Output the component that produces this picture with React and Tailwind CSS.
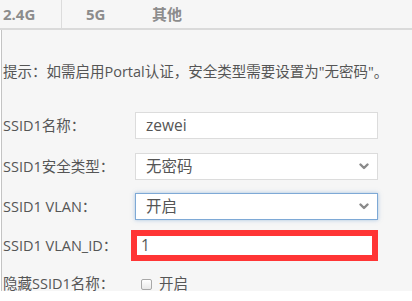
import React from 'react'

const FONT = "font-['Open_Sans','Noto_Sans_CJK_SC',sans-serif]"

function Chevron() {
  return (
    <svg width="10" height="7" viewBox="0 0 10 7" className="shrink-0">
      <polyline points="1.5,1.5 5,5 8.5,1.5" fill="none" stroke="#8a8a8a" strokeWidth="2.4" strokeLinecap="round" strokeLinejoin="round" />
    </svg>
  )
}

function Label({ children }) {
  return <div className="w-[133px] shrink-0 pl-px text-[14.5px] text-[#555] whitespace-nowrap">{children}</div>
}

export default function App() {
  return (
    <div className={`${FONT} w-[412px] h-[301px] overflow-hidden bg-white flex flex-col`}>
      {/* Tabs */}
      <div className="h-[30px] shrink-0 flex bg-[#f6f6f6] border-b-2 border-[#dadada]">
        <div className="w-[62px] h-[28px] flex items-center pl-[3px] border-r border-[#dcdcdc] text-[15px] font-bold text-[#8c8c8c]">2.4G</div>
        <div className="w-[64px] h-[28px] flex items-center pl-[24px] text-[15px] font-bold text-[#8c8c8c]">5G</div>
        <div className="w-[62px] h-[28px] flex items-center pl-[26px] text-[15px] font-bold text-[#8c8c8c]">其他</div>
      </div>

      {/* Body */}
      <div className="h-[261px] shrink-0 ml-px border-l border-[#c4c4c4] bg-[#f6f6f6] flex flex-col">
        <div className="mt-[32px] h-[20px] leading-[20px] pl-px text-[14.5px] text-[#555] whitespace-nowrap">
          提示：如需启用Portal认证，安全类型需要设置为"无密码"。
        </div>

        <div className="mt-[30px] h-[27px] flex items-center">
          <Label>SSID1名称：</Label>
          <div className="w-[243px] h-[27px] flex items-center px-[10px] bg-white border border-[#dcdcdc] text-[15.5px] text-[#555]">zewei</div>
        </div>

        <div className="mt-[14px] h-[27px] flex items-center">
          <Label>SSID1安全类型：</Label>
          <div className="w-[243px] h-[27px] flex items-center justify-between pl-[10px] pr-[8px] bg-white border border-[#dcdcdc] text-[15.5px] text-[#555]">
            <span>无密码</span>
            <Chevron />
          </div>
        </div>

        <div className="mt-[13px] h-[27px] flex items-center">
          <Label>SSID1 VLAN：</Label>
          <div className="w-[243px] h-[27px] flex items-center justify-between pl-[10px] pr-[8px] bg-white border border-[#7ea9d6] shadow-[0_0_4px_rgba(102,153,204,0.55)] text-[15.5px] text-[#555]">
            <span>开启</span>
            <Chevron />
          </div>
        </div>

        <div className="mt-[10px] h-[31px] flex items-center">
          <div className="w-[129px] shrink-0 pl-px text-[14.5px] text-[#555] whitespace-nowrap">SSID1 VLAN_ID：</div>
          <div className="w-[247px] h-[31px] border-[6px] border-[#ff3535] bg-white flex items-center pl-[4px] text-[15.5px] text-[#555]">1</div>
        </div>

        <div className="mt-[13px] h-[20px] flex items-center">
          <Label>隐藏SSID1名称：</Label>
          <div className="ml-[6px] w-[11px] h-[11px] rounded-[2px] border border-[#a8a8a8] bg-gradient-to-b from-white to-[#e8e8e8]" />
          <span className="ml-[7px] text-[14.5px] text-[#555]">开启</span>
        </div>
      </div>
    </div>
  )
}
